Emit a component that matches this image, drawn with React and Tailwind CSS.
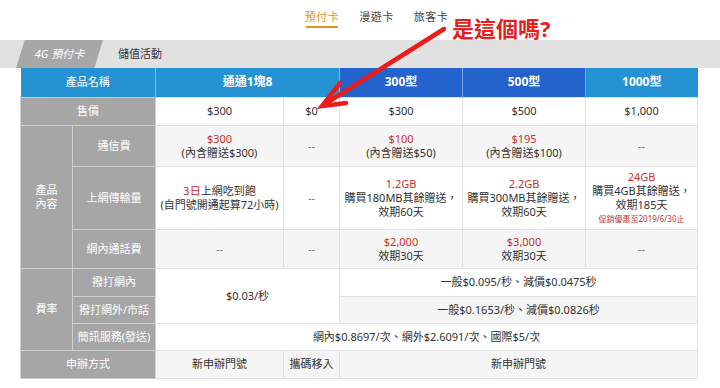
import React from "react";

const red = "text-[#c9302c]";

function Lbl({ children, className = "", ...p }) {
  return (
    <td
      {...p}
      className={`bg-[#a6a6a6] text-white text-center align-middle border border-[#cfcfcf] text-[11px] leading-[14px] ${className}`}
    >
      {children}
    </td>
  );
}

function Cell({ children, className = "", ...p }) {
  return (
    <td
      {...p}
      className={`text-center align-middle border border-[#e2e2e2] text-[#333] text-[11px] leading-[14px] ${className}`}
    >
      {children}
    </td>
  );
}

const Dash = () => <span className="text-[#777]">--</span>;

export default function App() {
  return (
    <div
      className="relative w-[720px] h-[388px] bg-white overflow-hidden"
      style={{ fontFamily: '"Noto Sans", "Noto Sans CJK TC", sans-serif' }}
    >
      {/* top nav */}
      <div className="flex justify-center h-[40px] pl-[33px]">
        <div className="flex gap-[20px] pt-[9px] text-[11px] tracking-[0.5px]">
          <div className="flex flex-col items-center">
            <span className="text-[#e8901f] leading-[16px]">預付卡</span>
            <span className="mt-[1px] h-[2px] w-[32px] bg-[#e8901f]" />
          </div>
          <span className="text-[#444] leading-[16px]">漫遊卡</span>
          <span className="text-[#444] leading-[16px]">旅客卡</span>
        </div>
      </div>

      {/* grey sub-nav */}
      <div className="flex items-center h-[28px] bg-[#e1e1e1]">
        <div className="relative ml-[16px] w-[87px] h-[28px]">
          <div className="absolute inset-0 bg-[#a7a7a7] [clip-path:polygon(10%_0,100%_0,90%_100%,0_100%)]" />
          <div className="relative flex h-full items-center justify-center italic text-white text-[11px]">
            4G 預付卡
          </div>
        </div>
        <span className="ml-[15px] text-[#333] text-[11px]">儲值活動</span>
      </div>

      {/* table */}
      <div className="pl-[20px]">
        <table className="table-fixed border-collapse w-[677px]">
          <colgroup>
            <col className="w-[52px]" />
            <col className="w-[83px]" />
            <col className="w-[128px]" />
            <col className="w-[56px]" />
            <col className="w-[123px]" />
            <col className="w-[123px]" />
            <col className="w-[112px]" />
          </colgroup>
          <tbody>
            <tr className="h-[29px]">
              <td colSpan={2} className="bg-[#2592d3] text-white text-center text-[11px] border-r border-[#7cbfe8]">
                產品名稱
              </td>
              <td colSpan={2} className="bg-[#2592d3] text-white text-center text-[12px] font-bold border-r border-[#7cbfe8]">
                通通1塊8
              </td>
              <td className="bg-[#2462cc] text-white text-center text-[12px] font-bold border-r border-[#7ea3e6]">
                300型
              </td>
              <td className="bg-[#2462cc] text-white text-center text-[12px] font-bold border-r border-[#7ea3e6]">
                500型
              </td>
              <td className="bg-[#2592d3] text-white text-center text-[12px] font-bold">
                1000型
              </td>
            </tr>
            <tr className="h-[28px]">
              <Lbl colSpan={2}>售價</Lbl>
              <Cell>$300</Cell>
              <Cell>$0</Cell>
              <Cell>$300</Cell>
              <Cell>$500</Cell>
              <Cell>$1,000</Cell>
            </tr>
            <tr className="h-[41px] bg-[#f5f5f5]">
              <Lbl rowSpan={3}>
                產品
                <br />
                內容
              </Lbl>
              <Lbl>通信費</Lbl>
              <Cell>
                <div className={red}>$300</div>
                <div>(內含贈送$300)</div>
              </Cell>
              <Cell>
                <Dash />
              </Cell>
              <Cell>
                <div className={red}>$100</div>
                <div>(內含贈送$50)</div>
              </Cell>
              <Cell>
                <div className={red}>$195</div>
                <div>(內含贈送$100)</div>
              </Cell>
              <Cell>
                <Dash />
              </Cell>
            </tr>
            <tr className="h-[63px] bg-white">
              <Lbl>上網傳輸量</Lbl>
              <Cell>
                <div>
                  <span className={red}>3日</span>上網吃到飽
                </div>
                <div>(自門號開通起算72小時)</div>
              </Cell>
              <Cell>
                <Dash />
              </Cell>
              <Cell>
                <div className={red}>1.2GB</div>
                <div>購買180MB其餘贈送，</div>
                <div>效期60天</div>
              </Cell>
              <Cell>
                <div className={red}>2.2GB</div>
                <div>購買300MB其餘贈送，</div>
                <div>效期60天</div>
              </Cell>
              <Cell>
                <div className={red}>24GB</div>
                <div>購買4GB其餘贈送，</div>
                <div>效期185天</div>
                <div className={`${red} text-[8px] leading-[13px]`}>促銷優惠至2019/6/30止</div>
              </Cell>
            </tr>
            <tr className="h-[39px] bg-[#f5f5f5]">
              <Lbl>網內通話費</Lbl>
              <Cell>
                <Dash />
              </Cell>
              <Cell>
                <Dash />
              </Cell>
              <Cell>
                <div className={red}>$2,000</div>
                <div>效期30天</div>
              </Cell>
              <Cell>
                <div className={red}>$3,000</div>
                <div>效期30天</div>
              </Cell>
              <Cell>
                <Dash />
              </Cell>
            </tr>
            <tr className="h-[28px] bg-white">
              <Lbl rowSpan={3}>費率</Lbl>
              <Lbl>撥打網內</Lbl>
              <Cell colSpan={2} rowSpan={2} className="bg-white">
                $0.03/秒
              </Cell>
              <Cell colSpan={3}>一般$0.095/秒、減價$0.0475秒</Cell>
            </tr>
            <tr className="h-[27px]">
              <Lbl>撥打網外/市話</Lbl>
              <Cell colSpan={3} className="bg-[#f5f5f5]">
                一般$0.1653/秒、減價$0.0826秒
              </Cell>
            </tr>
            <tr className="h-[27px] bg-white">
              <Lbl>簡訊服務(發送)</Lbl>
              <Cell colSpan={5}>網內$0.8697/次、網外$2.6091/次、國際$5/次</Cell>
            </tr>
            <tr className="h-[28px] bg-[#f5f5f5]">
              <Lbl colSpan={2}>申辦方式</Lbl>
              <Cell>新申辦門號</Cell>
              <Cell>攜碼移入</Cell>
              <Cell colSpan={3}>新申辦門號</Cell>
            </tr>
          </tbody>
        </table>
      </div>

      {/* annotation overlay */}
      <div className="absolute left-[452px] top-[15px] text-[22px] font-bold leading-[26px] text-[#e3211f]">
        是這個嗎?
      </div>
      <svg className="absolute left-0 top-0 pointer-events-none" width="720" height="388">
        <line x1="444" y1="29" x2="325" y2="104" stroke="#ec1c1c" strokeWidth="4.5" strokeLinecap="round" />
        <polyline
          points="340,83 322,106 346,103"
          fill="none"
          stroke="#ec1c1c"
          strokeWidth="4.5"
          strokeLinejoin="miter"
          strokeLinecap="round"
        />
      </svg>
    </div>
  );
}
